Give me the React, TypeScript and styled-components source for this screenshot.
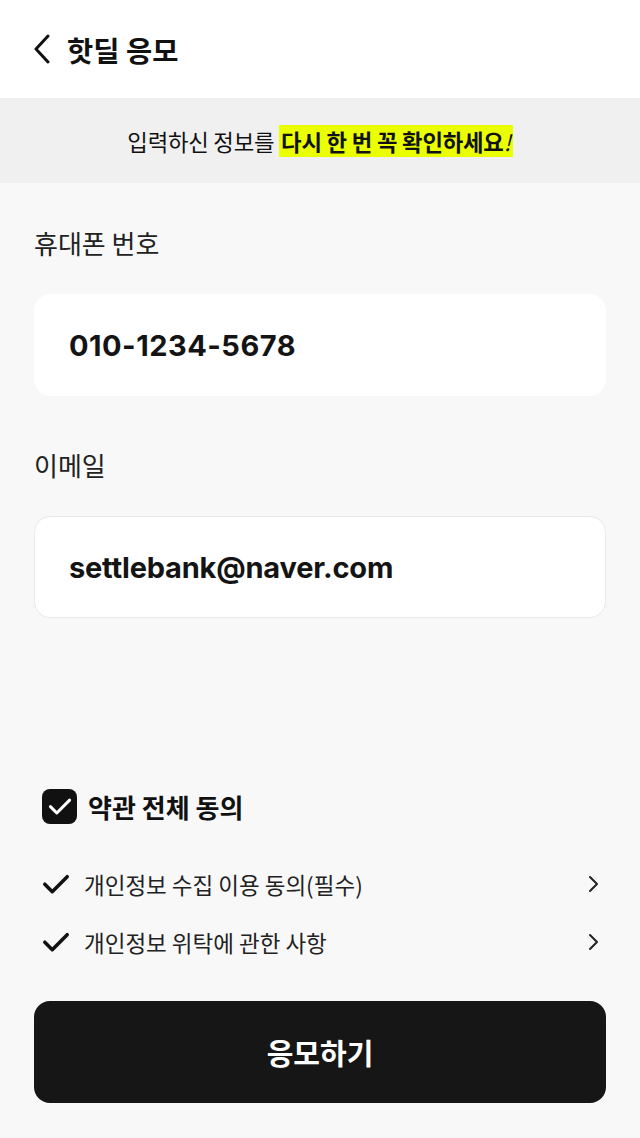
import React from 'react'
import styled, { createGlobalStyle } from 'styled-components'

const GlobalStyle = createGlobalStyle`
  html, body {
    margin: 0;
    padding: 0;
  }
  body {
    font-family: "Inter", "Noto Sans CJK KR", sans-serif;
    color: #111;
    background: #f8f8f8;
  }
  * {
    box-sizing: border-box;
  }
`

const Page = styled.div`
  display: flex;
  flex-direction: column;
  min-height: 1138px;
  background: #f8f8f8;
`

const Header = styled.header`
  height: 98px;
  background: #fff;
  display: flex;
  align-items: center;
  gap: 13px;
  padding: 0 0 0 30px;
`

const BackButton = styled.button`
  display: flex;
  align-items: center;
  justify-content: center;
  width: 24px;
  height: 32px;
  padding: 0;
  border: none;
  background: none;
`

const Title = styled.h1`
  margin: 0;
  font-family: "Noto Sans CJK KR", sans-serif;
  font-size: 28.5px;
  font-weight: 700;
`

const Notice = styled.div`
  height: 85px;
  background: #f0f0f0;
  display: flex;
  align-items: center;
  justify-content: center;
  font-family: "Noto Sans CJK KR", sans-serif;
  font-size: 22.3px;
  letter-spacing: -0.2px;
`

const Highlight = styled.mark`
  background: #eaff00;
  color: #111;
  font-weight: 700;
  padding: 0 2px;
`

const Bang = styled.i`
  font-weight: 400;
`

const Content = styled.main`
  flex: 1;
  display: flex;
  flex-direction: column;
  padding: 42px 34px 35px;
`

const Field = styled.div`
  display: flex;
  flex-direction: column;
  gap: 33px;
  margin-bottom: 51px;
`

const Label = styled.label`
  font-family: "Noto Sans CJK KR", sans-serif;
  font-size: 26px;
  line-height: 36px;
  color: #222;
`

const InputBox = styled.div<{ $bordered?: boolean; $tracking: number }>`
  height: 102px;
  background: #fff;
  border-radius: 16px;
  border: 1px solid ${({ $bordered }) => ($bordered ? '#e9e9e9' : '#fff')};
  display: flex;
  align-items: center;
  padding: 0 34px;
  font-size: 29px;
  font-weight: 700;
  letter-spacing: ${({ $tracking }) => $tracking}px;
  color: #141414;
`

const Terms = styled.section`
  margin-top: auto;
  display: flex;
  flex-direction: column;
`

const AllAgree = styled.div`
  display: flex;
  align-items: center;
  gap: 11px;
  padding-left: 8px;
  margin-bottom: 30px;
  font-family: "Noto Sans CJK KR", sans-serif;
  font-size: 26px;
  font-weight: 700;
`

const CheckBox = styled.span`
  width: 35px;
  height: 35px;
  border-radius: 8px;
  background: #111;
  display: flex;
  align-items: center;
  justify-content: center;
`

const TermRow = styled.div`
  display: flex;
  align-items: center;
  height: 58px;
  padding: 0 6px 0 8px;
  gap: 14px;
  font-family: "Noto Sans CJK KR", sans-serif;
  font-size: 22.5px;
  color: #222;
`

const TermText = styled.span`
  flex: 1;
`

const SubmitButton = styled.button`
  margin-top: 30px;
  height: 102px;
  width: 100%;
  border: none;
  border-radius: 16px;
  background: #161616;
  color: #fff;
  font-family: "Noto Sans CJK KR", sans-serif;
  font-size: 29px;
  font-weight: 700;
`

const ChevronLeft = () => (
  <svg width="20" height="30" viewBox="0 0 20 30" fill="none">
    <path d="M16 2 L4 15 L16 28" stroke="#111" strokeWidth="3" strokeLinecap="round" strokeLinejoin="round" />
  </svg>
)

const ChevronRight = () => (
  <svg width="12" height="18" viewBox="0 0 12 18" fill="none">
    <path d="M2 2 L9 9 L2 16" stroke="#222" strokeWidth="2" strokeLinecap="round" strokeLinejoin="round" />
  </svg>
)

const CheckMark = ({ color, size }: { color: string; size: number }) => (
  <svg width={size} height={size * 0.8} viewBox="0 0 30 24" fill="none">
    <path d="M3 12 L11 20 L27 4" stroke={color} strokeWidth="3.8" strokeLinecap="round" strokeLinejoin="round" />
  </svg>
)

const terms = ['개인정보 수집 이용 동의(필수)', '개인정보 위탁에 관한 사항']

const App: React.FC = () => {
  return (
    <Page>
      <GlobalStyle />
      <Header>
        <BackButton aria-label="뒤로">
          <ChevronLeft />
        </BackButton>
        <Title>핫딜 응모</Title>
      </Header>
      <Notice>
        입력하신 정보를&nbsp;<Highlight>다시 한 번 꼭 확인하세요<Bang>!</Bang></Highlight>
      </Notice>
      <Content>
        <Field>
          <Label>휴대폰 번호</Label>
          <InputBox $tracking={0.5}>010-1234-5678</InputBox>
        </Field>
        <Field>
          <Label>이메일</Label>
          <InputBox $bordered $tracking={-0.2}>settlebank@naver.com</InputBox>
        </Field>
        <Terms>
          <AllAgree>
            <CheckBox>
              <CheckMark color="#fff" size={24} />
            </CheckBox>
            약관 전체 동의
          </AllAgree>
          {terms.map((t) => (
            <TermRow key={t}>
              <CheckMark color="#111" size={28} />
              <TermText>{t}</TermText>
              <ChevronRight />
            </TermRow>
          ))}
          <SubmitButton>응모하기</SubmitButton>
        </Terms>
      </Content>
    </Page>
  )
}

export default App
